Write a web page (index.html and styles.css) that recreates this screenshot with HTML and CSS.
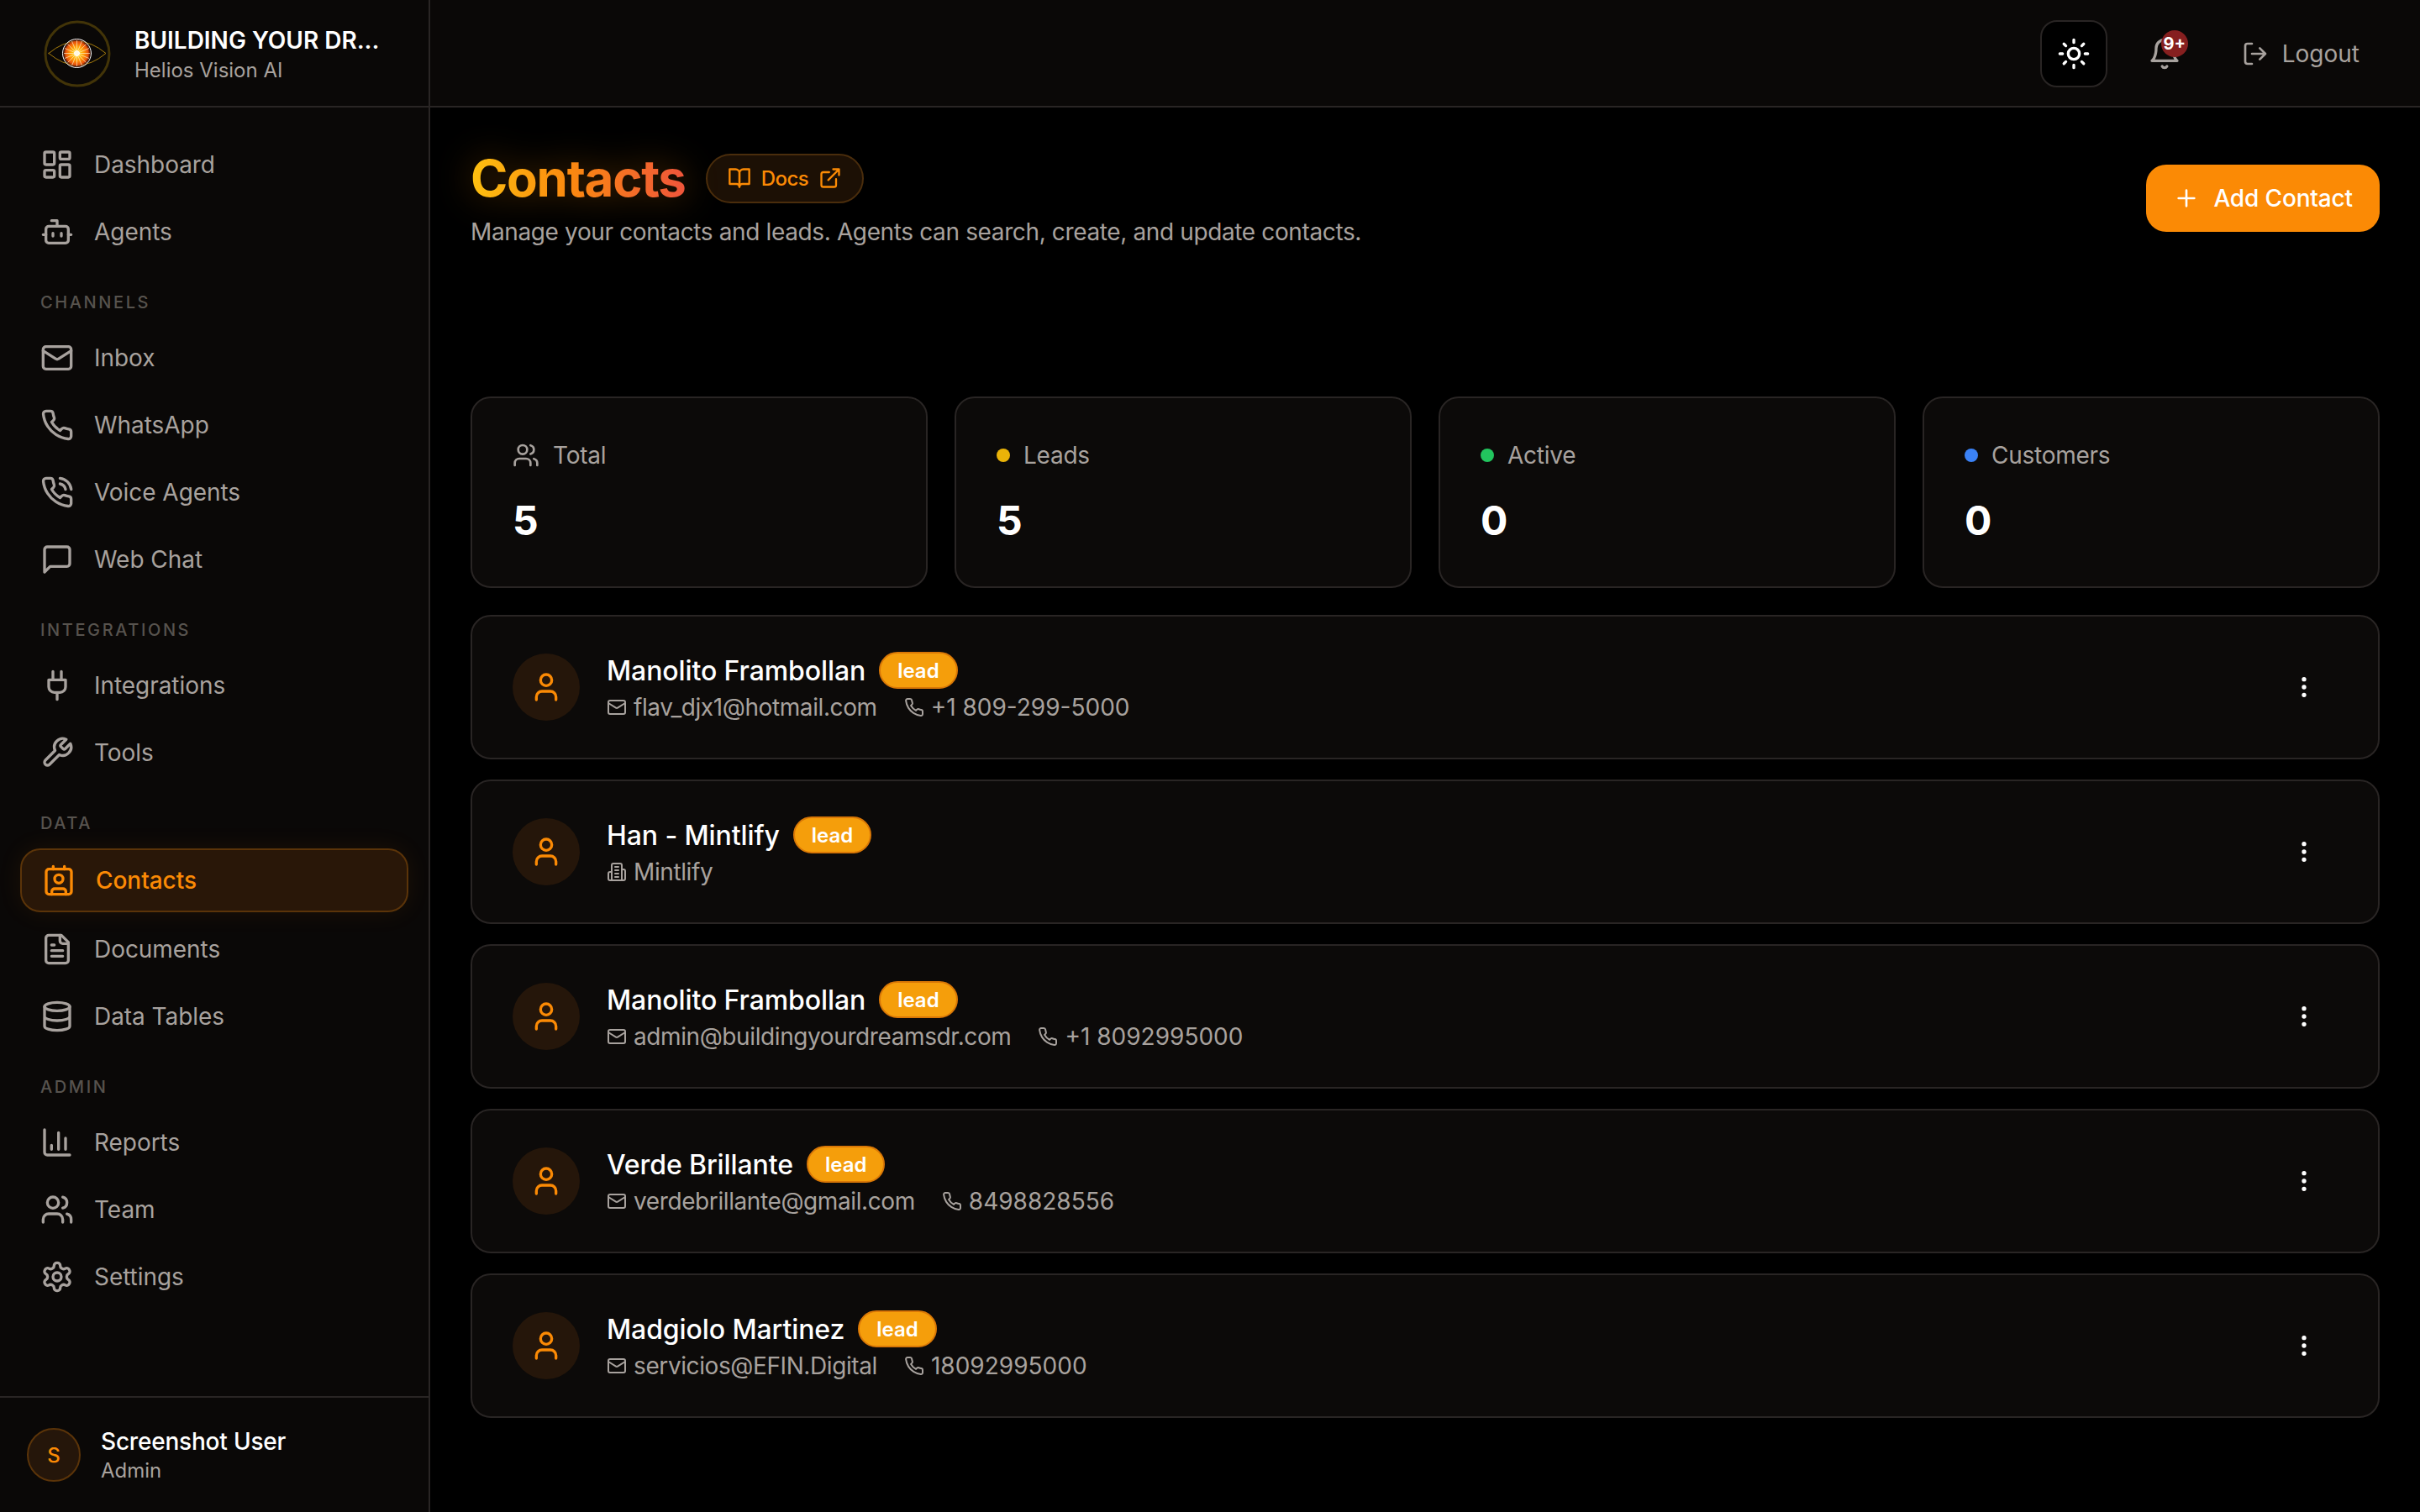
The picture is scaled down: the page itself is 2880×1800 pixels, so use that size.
FILE: index.html
```html
<!DOCTYPE html>
<html lang="en">
<head>
<meta charset="utf-8">
<title>Contacts</title>
<link rel="stylesheet" href="styles.css">
</head>
<body>
<svg class="sprite" aria-hidden="true">
  <defs>
    <symbol id="i-dash" viewBox="0 0 24 24"><rect x="3" y="3" width="7" height="9" rx="1"/><rect x="14" y="3" width="7" height="5" rx="1"/><rect x="14" y="12" width="7" height="9" rx="1"/><rect x="3" y="16" width="7" height="5" rx="1"/></symbol>
    <symbol id="i-bot" viewBox="0 0 24 24"><path d="M12 8V4H8"/><rect x="4" y="8" width="16" height="12" rx="2"/><path d="M2 14h2M20 14h2M15 13v2M9 13v2"/></symbol>
    <symbol id="i-mail" viewBox="0 0 24 24"><rect x="2" y="4" width="20" height="16" rx="2"/><path d="m22 7-8.97 5.7a1.94 1.94 0 0 1-2.06 0L2 7"/></symbol>
    <symbol id="i-phone" viewBox="0 0 24 24"><path d="M22 16.92v3a2 2 0 0 1-2.18 2 19.79 19.79 0 0 1-8.63-3.07 19.5 19.5 0 0 1-6-6 19.79 19.79 0 0 1-3.07-8.67A2 2 0 0 1 4.11 2h3a2 2 0 0 1 2 1.72 12.84 12.84 0 0 0 .7 2.81 2 2 0 0 1-.45 2.11L8.09 9.91a16 16 0 0 0 6 6l1.27-1.27a2 2 0 0 1 2.11-.45 12.84 12.84 0 0 0 2.81.7A2 2 0 0 1 22 16.92z"/></symbol>
    <symbol id="i-call" viewBox="0 0 24 24"><path d="M22 16.92v3a2 2 0 0 1-2.18 2 19.79 19.79 0 0 1-8.63-3.07 19.5 19.5 0 0 1-6-6 19.79 19.79 0 0 1-3.07-8.67A2 2 0 0 1 4.11 2h3a2 2 0 0 1 2 1.72 12.84 12.84 0 0 0 .7 2.81 2 2 0 0 1-.45 2.11L8.09 9.91a16 16 0 0 0 6 6l1.27-1.27a2 2 0 0 1 2.11-.45 12.84 12.84 0 0 0 2.81.7A2 2 0 0 1 22 16.92z"/><path d="M14.05 2a9 9 0 0 1 8 7.94M14.05 6A5 5 0 0 1 18 10"/></symbol>
    <symbol id="i-chat" viewBox="0 0 24 24"><path d="M21 15a2 2 0 0 1-2 2H7l-4 4V5a2 2 0 0 1 2-2h14a2 2 0 0 1 2 2z"/></symbol>
    <symbol id="i-plug" viewBox="0 0 24 24"><path d="M12 22v-5M9 8V2M15 8V2M18 8v5a4 4 0 0 1-4 4h-4a4 4 0 0 1-4-4V8Z"/></symbol>
    <symbol id="i-wrench" viewBox="0 0 24 24"><path d="M14.7 6.3a1 1 0 0 0 0 1.4l1.6 1.6a1 1 0 0 0 1.4 0l3.77-3.77a6 6 0 0 1-7.94 7.94l-6.91 6.91a2.12 2.12 0 0 1-3-3l6.91-6.91a6 6 0 0 1 7.94-7.94l-3.76 3.76z"/></symbol>
    <symbol id="i-contact" viewBox="0 0 24 24"><path d="M16 2v2M8 2v2M7 22v-2a2 2 0 0 1 2-2h6a2 2 0 0 1 2 2v2"/><circle cx="12" cy="11" r="3"/><rect x="3" y="4" width="18" height="18" rx="2"/></symbol>
    <symbol id="i-file" viewBox="0 0 24 24"><path d="M15 2H6a2 2 0 0 0-2 2v16a2 2 0 0 0 2 2h12a2 2 0 0 0 2-2V7Z"/><path d="M14 2v4a2 2 0 0 0 2 2h4M10 9H8M16 13H8M16 17H8"/></symbol>
    <symbol id="i-db" viewBox="0 0 24 24"><ellipse cx="12" cy="5" rx="9" ry="3"/><path d="M3 5V19A9 3 0 0 0 21 19V5M3 12A9 3 0 0 0 21 12"/></symbol>
    <symbol id="i-chart" viewBox="0 0 24 24"><path d="M3 3v16a2 2 0 0 0 2 2h16M18 17V9M13 17V5M8 17v-3"/></symbol>
    <symbol id="i-users" viewBox="0 0 24 24"><path d="M16 21v-2a4 4 0 0 0-4-4H6a4 4 0 0 0-4 4v2"/><circle cx="9" cy="7" r="4"/><path d="M22 21v-2a4 4 0 0 0-3-3.870M16 3.130a4 4 0 0 1 0 7.750"/></symbol>
    <symbol id="i-gear" viewBox="0 0 24 24"><path d="M12.220 2h-.44a2 2 0 0 0-2 2v.18a2 2 0 0 1-1 1.730l-.43.25a2 2 0 0 1-2 0l-.15-.08a2 2 0 0 0-2.730.73l-.22.38a2 2 0 0 0 .73 2.730l.15.1a2 2 0 0 1 1 1.720v.51a2 2 0 0 1-1 1.740l-.15.09a2 2 0 0 0-.73 2.730l.22.38a2 2 0 0 0 2.730.73l.15-.08a2 2 0 0 1 2 0l.43.25a2 2 0 0 1 1 1.730V20a2 2 0 0 0 2 2h.44a2 2 0 0 0 2-2v-.18a2 2 0 0 1 1-1.730l.43-.25a2 2 0 0 1 2 0l.15.08a2 2 0 0 0 2.730-.73l.22-.39a2 2 0 0 0-.73-2.730l-.15-.08a2 2 0 0 1-1-1.740v-.5a2 2 0 0 1 1-1.740l.15-.09a2 2 0 0 0 .73-2.730l-.22-.38a2 2 0 0 0-2.730-.73l-.15.08a2 2 0 0 1-2 0l-.43-.25a2 2 0 0 1-1-1.730V4a2 2 0 0 0-2-2z"/><circle cx="12" cy="12" r="3"/></symbol>
    <symbol id="i-sun" viewBox="0 0 24 24"><circle cx="12" cy="12" r="4"/><path d="M12 2v2M12 20v2M4.930 4.930l1.410 1.410M17.660 17.660l1.410 1.410M2 12h2M20 12h2M6.340 17.660l-1.410 1.410M19.070 4.930l-1.410 1.410"/></symbol>
    <symbol id="i-bell" viewBox="0 0 24 24"><path d="M6 8a6 6 0 0 1 12 0c0 7 3 9 3 9H3s3-2 3-9"/><path d="M10.300 21a1.940 1.940 0 0 0 3.400 0"/></symbol>
    <symbol id="i-logout" viewBox="0 0 24 24"><path d="M9 21H5a2 2 0 0 1-2-2V5a2 2 0 0 1 2-2h4"/><path d="M16 17l5-5-5-5M21 12H9"/></symbol>
    <symbol id="i-plus" viewBox="0 0 24 24"><path d="M5 12h14M12 5v14"/></symbol>
    <symbol id="i-book" viewBox="0 0 24 24"><path d="M2 3h6a4 4 0 0 1 4 4v14a3 3 0 0 0-3-3H2z"/><path d="M22 3h-6a4 4 0 0 0-4 4v14a3 3 0 0 1 3-3h7z"/></symbol>
    <symbol id="i-ext" viewBox="0 0 24 24"><path d="M15 3h6v6M10 14 21 3M18 13v6a2 2 0 0 1-2 2H5a2 2 0 0 1-2-2V8a2 2 0 0 1 2-2h6"/></symbol>
    <symbol id="i-building" viewBox="0 0 24 24"><path d="M6 22V4a2 2 0 0 1 2-2h8a2 2 0 0 1 2 2v18Z"/><path d="M6 12H4a2 2 0 0 0-2 2v6a2 2 0 0 0 2 2h2M18 9h2a2 2 0 0 1 2 2v9a2 2 0 0 1-2 2h-2M10 6h4M10 10h4M10 14h4M10 18h4"/></symbol>
    <symbol id="i-user" viewBox="0 0 24 24"><path d="M19 21v-2a4 4 0 0 0-4-4H9a4 4 0 0 0-4 4v2"/><circle cx="12" cy="7" r="4"/></symbol>
    <symbol id="i-more" viewBox="0 0 24 24"><circle cx="12" cy="5" r="1"/><circle cx="12" cy="12" r="1"/><circle cx="12" cy="19" r="1"/></symbol>
    <radialGradient id="sunfill">
      <stop offset="0" stop-color="#fff6d8"/>
      <stop offset=".18" stop-color="#ffd21a"/>
      <stop offset=".5" stop-color="#ff9a08"/>
      <stop offset=".8" stop-color="#e8500c"/>
      <stop offset="1" stop-color="#a02a06" stop-opacity="0"/>
    </radialGradient>
  </defs>
</svg>

<div class="app">
  <aside class="sidebar">
    <div class="brand">
      <svg class="logo" viewBox="0 0 80 80">
        <circle class="logo-ring" cx="40" cy="40" r="38"/>
        <path class="logo-eye" d="M6 39.500 Q40 11 74 39.500 Q40 68 6 39.500Z"/>
        <circle cx="39.500" cy="39.500" r="17" fill="url(#sunfill)"/>
        <path class="logo-rays" d="M39.500 24v31M24 39.500h31M28.500 28.500l22 22M50.500 28.500l-22 22M33.500 25l12 29M45.500 25l-12 29M25 33.500l29 12M25 45.500l29-12"/>
        <circle cx="39.500" cy="39.500" r="3" fill="#fff8e0"/>
      </svg>
      <div class="brand-text">
        <div class="brand-title">BUILDING YOUR DR...</div>
        <div class="brand-sub">Helios Vision AI</div>
      </div>
    </div>

    <nav class="nav">
      <a class="nav-item"><svg class="nav-ic"><use href="#i-dash"/></svg>Dashboard</a>
      <a class="nav-item"><svg class="nav-ic"><use href="#i-bot"/></svg>Agents</a>
      <div class="nav-label">CHANNELS</div>
      <a class="nav-item"><svg class="nav-ic"><use href="#i-mail"/></svg>Inbox</a>
      <a class="nav-item"><svg class="nav-ic"><use href="#i-phone"/></svg>WhatsApp</a>
      <a class="nav-item"><svg class="nav-ic"><use href="#i-call"/></svg>Voice Agents</a>
      <a class="nav-item"><svg class="nav-ic"><use href="#i-chat"/></svg>Web Chat</a>
      <div class="nav-label">INTEGRATIONS</div>
      <a class="nav-item"><svg class="nav-ic"><use href="#i-plug"/></svg>Integrations</a>
      <a class="nav-item"><svg class="nav-ic"><use href="#i-wrench"/></svg>Tools</a>
      <div class="nav-label">DATA</div>
      <a class="nav-item active"><svg class="nav-ic"><use href="#i-contact"/></svg>Contacts</a>
      <a class="nav-item"><svg class="nav-ic"><use href="#i-file"/></svg>Documents</a>
      <a class="nav-item"><svg class="nav-ic"><use href="#i-db"/></svg>Data Tables</a>
      <div class="nav-label">ADMIN</div>
      <a class="nav-item"><svg class="nav-ic"><use href="#i-chart"/></svg>Reports</a>
      <a class="nav-item"><svg class="nav-ic"><use href="#i-users"/></svg>Team</a>
      <a class="nav-item"><svg class="nav-ic"><use href="#i-gear"/></svg>Settings</a>
    </nav>

    <div class="account">
      <div class="account-avatar">S</div>
      <div>
        <div class="account-name">Screenshot User</div>
        <div class="account-role">Admin</div>
      </div>
    </div>
  </aside>

  <div class="main">
    <header class="topbar">
      <button class="theme-btn"><svg class="ic-40"><use href="#i-sun"/></svg></button>
      <button class="bell-btn"><svg class="ic-40"><use href="#i-bell"/></svg><span class="bell-badge">9+</span></button>
      <button class="logout-btn"><svg class="ic-32"><use href="#i-logout"/></svg>Logout</button>
    </header>

    <main class="content">
      <section class="page-head">
        <div>
          <div class="title-row">
            <h1 class="title">Contacts</h1>
            <a class="docs"><svg class="ic-28"><use href="#i-book"/></svg>Docs<svg class="ic-28"><use href="#i-ext"/></svg></a>
          </div>
          <p class="subtitle">Manage your contacts and leads. Agents can search, create, and update contacts.</p>
        </div>
        <button class="add-btn"><svg class="ic-32"><use href="#i-plus"/></svg>Add Contact</button>
      </section>

      <section class="stats">
        <div class="stat">
          <div class="stat-label"><svg class="ic-32"><use href="#i-users"/></svg>Total</div>
          <div class="stat-value">5</div>
        </div>
        <div class="stat">
          <div class="stat-label"><span class="dot dot-yellow"></span>Leads</div>
          <div class="stat-value">5</div>
        </div>
        <div class="stat">
          <div class="stat-label"><span class="dot dot-green"></span>Active</div>
          <div class="stat-value">0</div>
        </div>
        <div class="stat">
          <div class="stat-label"><span class="dot dot-blue"></span>Customers</div>
          <div class="stat-value">0</div>
        </div>
      </section>

      <section class="list">
        <article class="card">
          <div class="avatar"><svg class="ic-40"><use href="#i-user"/></svg></div>
          <div class="card-body">
            <div class="name-row"><span class="name">Manolito Frambollan</span><span class="badge">lead</span></div>
            <div class="meta">
              <span class="meta-item"><svg class="ic-24"><use href="#i-mail"/></svg><span class="meta-text">flav_djx1@hotmail.com</span></span>
              <span class="meta-item"><svg class="ic-24"><use href="#i-phone"/></svg>+1 809-299-5000</span>
            </div>
          </div>
          <button class="more"><svg class="ic-32"><use href="#i-more"/></svg></button>
        </article>
        <article class="card">
          <div class="avatar"><svg class="ic-40"><use href="#i-user"/></svg></div>
          <div class="card-body">
            <div class="name-row"><span class="name">Han - Mintlify</span><span class="badge">lead</span></div>
            <div class="meta">
              <span class="meta-item"><svg class="ic-24"><use href="#i-building"/></svg><span class="meta-text">Mintlify</span></span>
            </div>
          </div>
          <button class="more"><svg class="ic-32"><use href="#i-more"/></svg></button>
        </article>
        <article class="card">
          <div class="avatar"><svg class="ic-40"><use href="#i-user"/></svg></div>
          <div class="card-body">
            <div class="name-row"><span class="name">Manolito Frambollan</span><span class="badge">lead</span></div>
            <div class="meta">
              <span class="meta-item"><svg class="ic-24"><use href="#i-mail"/></svg><span class="meta-text">admin@buildingyourdreamsdr.com</span></span>
              <span class="meta-item"><svg class="ic-24"><use href="#i-phone"/></svg>+1 8092995000</span>
            </div>
          </div>
          <button class="more"><svg class="ic-32"><use href="#i-more"/></svg></button>
        </article>
        <article class="card">
          <div class="avatar"><svg class="ic-40"><use href="#i-user"/></svg></div>
          <div class="card-body">
            <div class="name-row"><span class="name">Verde Brillante</span><span class="badge">lead</span></div>
            <div class="meta">
              <span class="meta-item"><svg class="ic-24"><use href="#i-mail"/></svg><span class="meta-text">verdebrillante@gmail.com</span></span>
              <span class="meta-item"><svg class="ic-24"><use href="#i-phone"/></svg>8498828556</span>
            </div>
          </div>
          <button class="more"><svg class="ic-32"><use href="#i-more"/></svg></button>
        </article>
        <article class="card">
          <div class="avatar"><svg class="ic-40"><use href="#i-user"/></svg></div>
          <div class="card-body">
            <div class="name-row"><span class="name">Madgiolo Martinez</span><span class="badge">lead</span></div>
            <div class="meta">
              <span class="meta-item"><svg class="ic-24"><use href="#i-mail"/></svg><span class="meta-text">servicios@EFIN.Digital</span></span>
              <span class="meta-item"><svg class="ic-24"><use href="#i-phone"/></svg>18092995000</span>
            </div>
          </div>
          <button class="more"><svg class="ic-32"><use href="#i-more"/></svg></button>
        </article>
      </section>
    </main>
  </div>
</div>
</body>
</html>
```
FILE: styles.css
```css
* { box-sizing: border-box; }
html, body { margin: 0; height: 100%; background: #000; }
body { font-family: Inter, "Liberation Sans", sans-serif; color: #fff; overflow: hidden; }
.sprite { width: 0; height: 0; display: block; }
button { font: inherit; color: inherit; background: none; border: 0; padding: 0; }
svg { fill: none; stroke: currentColor; stroke-linecap: round; stroke-linejoin: round; flex: none; }

.app { display: flex; height: 1800px; }

/* sidebar */
.sidebar { width: 512px; flex: none; display: flex; flex-direction: column; background: #0a0807; border-right: 2px solid #292524; }
.brand { height: 128px; flex: none; display: flex; align-items: center; gap: 28px; padding: 2px 24px 0 52px; border-bottom: 2px solid #292524; }
.logo { width: 80px; height: 80px; }
.logo-ring { stroke: #423408; stroke-width: 3; filter: blur(.5px); }
.logo-eye { stroke: #a67c0c; stroke-width: 1; }
.logo-rays { stroke: #ffe9c0; stroke-width: .7; stroke-linecap: butt; }
.brand-text { min-width: 0; flex: 1; }
.brand-title { font-size: 28px; line-height: 40px; font-weight: 600; color: #fff; white-space: nowrap; }
.brand-sub { font-size: 24px; line-height: 32px; color: #a8a29e; }

.nav { display: flex; flex-direction: column; gap: 8px; padding: 32px 24px 0; }
.nav-item { display: flex; align-items: center; gap: 24px; height: 72px; padding: 0 24px; font-size: 28px; letter-spacing: -.05px; color: #a8a29e; }
.nav-ic { width: 40px; height: 40px; stroke-width: 2; }
.nav-item.active { height: 76px; border: 2px solid #5b3409; border-radius: 24px; background: #291708; color: #fb8a05; font-weight: 500; box-shadow: 0 0 30px rgba(251, 138, 5, .08); }
.nav-label { margin: 26px 0 8px; padding-left: 24px; font-size: 20px; line-height: 28px; font-weight: 500; letter-spacing: 2.600px; color: #57534e; }

.account { margin-top: auto; height: 138px; display: flex; align-items: center; gap: 24px; padding: 0 32px; border-top: 2px solid #292524; }
.account-avatar { width: 64px; height: 64px; border-radius: 50%; display: flex; align-items: center; justify-content: center; background: #25160a; border: 2px solid #5b3409; color: #fb8a05; font-size: 24px; font-weight: 500; }
.account-name { font-size: 28px; line-height: 36px; font-weight: 500; letter-spacing: -.2px; color: #fff; }
.account-role { margin-top: 1px; font-size: 24px; line-height: 32px; color: #a8a29e; }

/* top bar */
.main { flex: 1; min-width: 0; display: flex; flex-direction: column; }
.topbar { height: 128px; flex: none; display: flex; align-items: center; justify-content: flex-end; padding: 2px 72px 0 0; background: #0a0807; border-bottom: 2px solid #292524; }
.theme-btn { width: 80px; height: 80px; display: flex; align-items: center; justify-content: center; background: #000; border: 2px solid #292524; border-radius: 20px; color: #fff; }
.bell-btn { position: relative; width: 40px; height: 40px; margin-left: 48px; color: #a8a29e; }
.bell-badge { position: absolute; top: -8px; left: 16px; width: 32px; height: 32px; border-radius: 50%; background: #861f1f; color: #fff; font-size: 20px; line-height: 32px; font-weight: 700; text-align: center; }
.logout-btn { display: flex; align-items: center; gap: 16px; margin-left: 72px; font-size: 28px; color: #a8a29e; }

.ic-40 { width: 40px; height: 40px; stroke-width: 2; }
.ic-32 { width: 32px; height: 32px; stroke-width: 2; }
.ic-28 { width: 28px; height: 28px; stroke-width: 2; }
.ic-24 { width: 24px; height: 24px; stroke-width: 2; }

/* content */
.content { flex: 1; padding: 48px 48px 0; }
.page-head { display: flex; align-items: center; justify-content: space-between; height: 120px; margin-bottom: 176px; }
.title-row { display: flex; align-items: center; gap: 24px; height: 72px; }
.title { margin: 0; font-size: 60px; line-height: 72px; font-weight: 700; letter-spacing: -1.300px; background: linear-gradient(90deg, #fdc010, #fb8a0f 45%, #ef553b); -webkit-background-clip: text; background-clip: text; color: transparent; filter: drop-shadow(0 0 20px rgba(251, 138, 5, .35)); }
.docs { display: flex; align-items: center; gap: 12px; height: 59px; padding: 0 24px; border: 2px solid #4a2d0c; border-radius: 30px; background: #1c1005; color: #fb8a05; font-size: 24px; font-weight: 500; letter-spacing: -.5px; }
.subtitle { margin: 8px 0 0; font-size: 28px; line-height: 40px; letter-spacing: -.37px; color: #a8a29e; }
.add-btn { display: flex; align-items: center; gap: 16px; height: 80px; padding: 0 32px; border-radius: 24px; background: #fb8a05; color: #fff; font-size: 28px; font-weight: 500; letter-spacing: -.15px; }

.stats { display: grid; grid-template-columns: repeat(4, 1fr); gap: 32px; margin-bottom: 32px; }
.stat { height: 228px; padding: 48px; background: #0c0a09; border: 2px solid #292524; border-radius: 24px; }
.stat-label { display: flex; align-items: center; gap: 16px; height: 40px; font-size: 28px; letter-spacing: -.25px; color: #a8a29e; }
.dot { width: 16px; height: 16px; border-radius: 50%; }
.dot-yellow { background: #eab308; }
.dot-green { background: #22c55e; }
.dot-blue { background: #3b82f6; }
.stat-value { margin-top: 28px; font-size: 48px; line-height: 60px; font-weight: 700; color: #fff; }

.list { display: flex; flex-direction: column; gap: 24px; }
.card { height: 172px; display: flex; align-items: center; gap: 32px; padding: 0 48px; background: #0c0a09; border: 2px solid #292524; border-radius: 24px; }
.avatar { width: 80px; height: 80px; flex: none; border-radius: 50%; display: flex; align-items: center; justify-content: center; background: #25160a; color: #fb8a05; }
.card-body { flex: 1; min-width: 0; }
.name-row { display: flex; align-items: center; gap: 16px; height: 44px; margin-top: 2px; }
.name { font-size: 32px; font-weight: 500; letter-spacing: -.1px; color: #fff; }
.badge { height: 44px; padding: 0 20px; display: flex; align-items: center; border: 2px solid #d97706; border-radius: 22px; background: #f59e0b; color: #fff; font-size: 24px; font-weight: 600; }
.meta { display: flex; gap: 32px; margin-top: 2px; font-size: 28px; line-height: 40px; color: #a8a29e; }
.meta-item { display: flex; align-items: center; gap: 8px; }
.meta-text { letter-spacing: -.4px; }
.more { width: 80px; height: 80px; display: flex; align-items: center; justify-content: center; color: #fff; }
```
